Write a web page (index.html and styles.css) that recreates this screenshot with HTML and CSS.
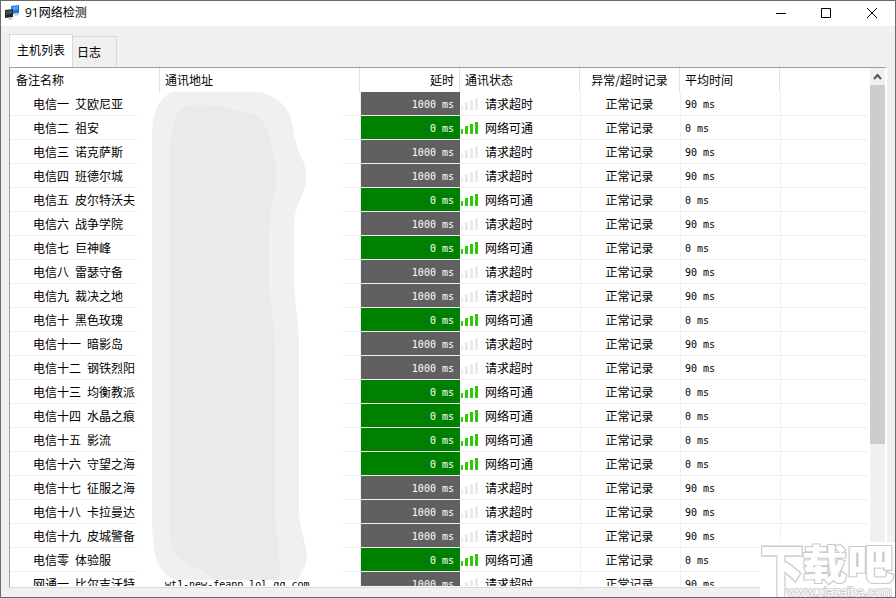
FILE: index.html
```html
<!DOCTYPE html>
<html lang="zh-CN">
<head>
<meta charset="utf-8">
<title>91网络检测</title>
<link rel="stylesheet" href="styles.css">
</head>
<body>
<div class="window">
  <header class="titlebar">
    <svg class="app-icon" width="16" height="16" viewBox="0 0 16 16">
      <path d="M6 1l8-1v8l-8 1z" fill="#1877dc"/>
      <path d="M7 2l6-1v3L7 6z" fill="#48a3f2"/>
      <path d="M9 9l4-1 1 2-4 1z" fill="#c5cbd0"/>
      <path d="M0 5l8-1v8l-8 1z" fill="#24282c"/>
      <path d="M1 6l6-1v3L1 10z" fill="#4b5056"/>
      <path d="M3 13l3-1 2 2-4 1z" fill="#bfc3c6"/>
    </svg>
    <h1 class="title">91网络检测</h1>
    <div class="controls">
      <svg width="12" height="12" viewBox="0 0 12 12"><path d="M0 6.5h10"/></svg>
      <svg width="12" height="12" viewBox="0 0 12 12"><path d="M.5 1.500h9v9h-9z"/></svg>
      <svg width="12" height="12" viewBox="0 0 12 12"><path d="M1 1l10 10M11 1L1 11"/></svg>
    </div>
  </header>
  <nav class="tabs">
    <div class="tab active">主机列表</div>
    <div class="tab">日志</div>
  </nav>
  <main class="list">
    <div class="table">
      <div class="head">
        <div>备注名称</div><div>通讯地址</div><div class="right">延时</div><div>通讯状态</div><div class="center">异常/超时记录</div><div>平均时间</div><div></div>
      </div>
      <div class="rows" id="rows"></div>
      <svg class="mask" width="205" height="490" viewBox="137 90 205 490">
        <path fill="#fff" d="M137 92h205v488H137z"/>
        <path fill="#f0f0f0" d="M171 92H260C276 96 286 105 290 116C294 127 294 142 301 156C304 163 306 168 306 174C307 188 301 196 298 205C294 214 294 222 294 236V286C295 305 299 322 299 342V516C301 532 307 548 307 557C306 567 301 573 298 580H176C160 574 154 559 153 541L152 525V135C153 111 158 100 171 92Z"/>
        <path fill="#eaeaea" d="M191 105H212C225 107 249 112 256 116C269 124 271 141 274 156C277 169 278 180 275 190C270 211 269 222 269 240V286C270 303 275 322 275 345V518C277 536 281 560 279 580H214C207 571 187 565 178 556C172 550 170 542 170 530V365C171 335 169 320 169 286V180C170 155 169 134 175 118C179 110 185 106 191 105Z"/>
      </svg>
    </div>
    <div class="scrollbar">
      <svg width="15" height="17" viewBox="0 0 15 17"><path d="M4 11l3.500-4 3.500 4" fill="none" stroke="#555" stroke-width="2"/></svg>
      <div class="thumb"></div>
    </div>
  </main>
  <svg class="watermark" width="136" height="56" viewBox="0 0 136 56">
    <rect width="136" height="56" fill="#fff"/>
    <g class="brand">
      <text transform="translate(0 49) scale(.95 1.220)">下</text>
      <text transform="translate(42 37) scale(.98 .87)">载</text>
      <text transform="translate(87 37) scale(1.020 .9)">吧</text>
    </g>
    <text class="url" x="27" y="54" textLength="105" lengthAdjust="spacingAndGlyphs">www.xiazaiba.com</text>
  </svg>
</div>
<script src="app.js"></script>
</body>
</html>
```
FILE: styles.css
```css
* { box-sizing: border-box; }
body {
  margin: 0;
  font: 12px/24px "Noto Sans CJK SC", sans-serif;
  color: #000;
}
.window {
  position: relative;
  width: 896px;
  height: 598px;
  border: 1px solid #6b6b6b;
  background: #f0f0f0;
  overflow: hidden;
}
.titlebar {
  display: flex;
  height: 25px;
  padding-left: 4px;
  background: #fff;
}
.app-icon { margin-top: 4px; }
.title {
  margin: 0 0 0 4px;
  font: 12px/24px "Open Sans", "Noto Sans CJK SC", sans-serif;
}
.controls {
  display: flex;
  gap: 33px;
  margin: 6px 17px 0 auto;
}
.controls svg { fill: none; stroke: #000; stroke-width: 1; }
.tabs {
  display: flex;
  align-items: flex-end;
  height: 41px;
  padding-left: 8px;
}
.tab {
  height: 31px;
  width: 44px;
  padding: 3px 4px 0;
  border: 1px solid #d9d9d9;
  border-left: 0;
  border-bottom: 0;
  white-space: nowrap;
}
.tab.active {
  width: 64px;
  height: 33px;
  padding: 3px 0 0 7px;
  border-left: 1px solid #d9d9d9;
  background: #fff;
}
.list {
  display: flex;
  width: 878px;
  height: 521px;
  margin-left: 8px;
  border: 1px solid;
  border-color: #a0a0a0 #fff #dcdcdc #a0a0a0;
  background: #fff;
}
.table {
  position: relative;
  width: 860px;
  height: 518px;
  overflow: hidden;
}
.head, .row {
  display: grid;
  grid-template-columns: 150px 200px 100px 120px 100px 100px 1fr;
  height: 24px;
}
.head > div {
  padding: 0 5px 0 6px;
  border-right: 1px solid #e2e2e2;
  white-space: nowrap;
}
.head > div:nth-child(2), .head > div:nth-child(4), .head > div:nth-child(6) { padding-left: 5px; }
.head > div:last-child { border: 0; }
.head .right { text-align: right; }
.head .center { text-align: center; padding: 0; }
.row { width: 859px; }
.row > div { border-bottom: 1px solid #f0f0f0; height: 24px; white-space: nowrap; }
.name { padding-left: 23px; word-spacing: 3.3px; }
.address { padding-left: 5px; }
.delay, .average, .address {
  font-family: "DejaVu Sans Mono", monospace;
  font-size: 10px;
  line-height: 26px;
}
.row .delay {
  border-left: 1px solid #f0f0f0;
  padding-right: 6px;
  background: #606060;
  color: #fff;
  text-align: right;
}
.row.online .delay { background: #008000; }
.status { display: flex; align-items: flex-start; }
.signal {
  display: flex;
  align-items: flex-end;
  gap: 2px;
  width: 18px;
  height: 12px;
  margin: 6px 6px 0 1px;
}
.signal i { width: 3px; background: #eaeaea; }
.signal i:nth-child(1) { width: 2px; height: 5px; }
.signal i:nth-child(2) { height: 8px; }
.signal i:nth-child(3) { height: 10px; }
.signal i:nth-child(4) { height: 12px; }
.online .signal i { background: #2fc806; }
.row .record, .row .average, .row .blank { border-left: 1px solid #f0f0f0; }
.record { padding-right: 2px; text-align: center; }
.average { padding-left: 4px; }
.mask { position: absolute; left: 127px; top: 22px; }
.scrollbar { width: 16px; border-right: 1px solid #fff; background: #f0f0f0; }
.scrollbar svg { display: block; }
.thumb { width: 15px; height: 359px; background: #cdcdcd; }
.watermark { position: absolute; left: 759px; top: 541px; }
.brand {
  font-size: 46px;
  font-weight: 900;
  fill: #fff;
  stroke: #c9c9c9;
  stroke-width: 2.4;
  paint-order: stroke;
}
.url {
  font: 13px "Liberation Sans", sans-serif;
  fill: #fff;
  stroke: #c8c8c8;
  stroke-width: 1.6;
  paint-order: stroke;
}
```
FILE: app.js
```javascript
const hosts = [
  ["电信一 艾欧尼亚", 0], ["电信二 祖安", 1], ["电信三 诺克萨斯", 0],
  ["电信四 班德尔城", 0], ["电信五 皮尔特沃夫", 1], ["电信六 战争学院", 0],
  ["电信七 巨神峰", 1], ["电信八 雷瑟守备", 0], ["电信九 裁决之地", 0],
  ["电信十 黑色玫瑰", 1], ["电信十一 暗影岛", 0], ["电信十二 钢铁烈阳", 0],
  ["电信十三 均衡教派", 1], ["电信十四 水晶之痕", 1], ["电信十五 影流", 1],
  ["电信十六 守望之海", 1], ["电信十七 征服之海", 0], ["电信十八 卡拉曼达", 0],
  ["电信十九 皮城警备", 0], ["电信零 体验服", 1],
  ["网通一 比尔吉沃特", 0, "wt1-new-feapp.lol.qq.com"]
];

document.getElementById("rows").innerHTML = hosts.map(([name, online, address = ""]) => `
  <div class="row${online ? " online" : ""}">
    <div class="name">${name}</div>
    <div class="address">${address}</div>
    <div class="delay">${online ? 0 : 1000} ms</div>
    <div class="status"><span class="signal"><i></i><i></i><i></i><i></i></span>${online ? "网络可通" : "请求超时"}</div>
    <div class="record">正常记录</div>
    <div class="average">${online ? 0 : 90} ms</div>
    <div class="blank"></div>
  </div>`).join("");
```
